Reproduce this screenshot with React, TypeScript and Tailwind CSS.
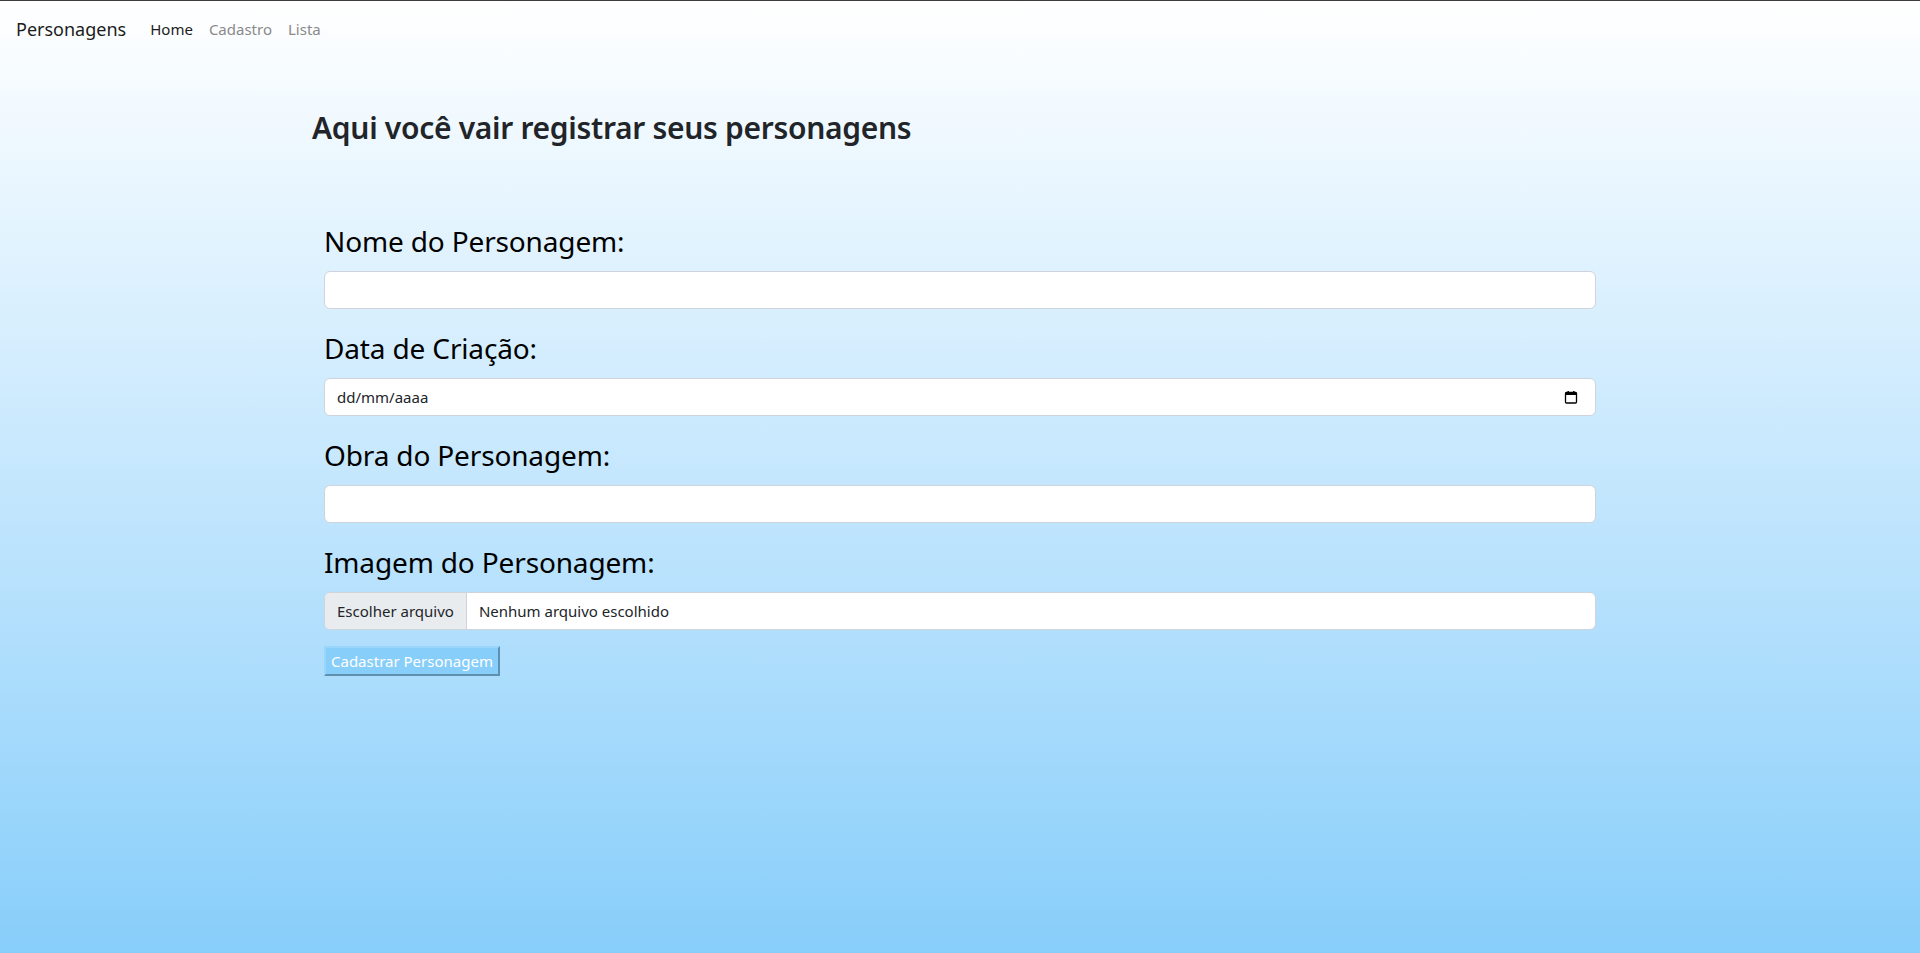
import React from 'react';

const font = { fontFamily: '"Noto Sans", "Open Sans", Arial, sans-serif' };

const fields = [
  { label: 'Nome do Personagem:', kind: 'text' },
  { label: 'Data de Criação:', kind: 'date' },
  { label: 'Obra do Personagem:', kind: 'text' },
  { label: 'Imagem do Personagem:', kind: 'file' },
];

const CalendarIcon = () => (
  <svg width="14" height="14" viewBox="0 0 14 14" fill="none">
    <rect x="1.5" y="2.5" width="11" height="10.5" rx="1" stroke="#000" strokeWidth="1.3" />
    <rect x="1.5" y="2.5" width="11" height="2.5" fill="#000" />
    <rect x="3.5" y="1" width="1.4" height="2" fill="#000" />
    <rect x="9.1" y="1" width="1.4" height="2" fill="#000" />
  </svg>
);

const Field = ({ label, kind }: { label: string; kind: string }) => (
  <div className="mb-[17px]">
    <label className="block text-[28px] leading-[44px] mb-2 text-black tracking-[-0.15px]">{label}</label>
    {kind === 'text' && (
      <input
        type="text"
        className="block w-full h-[38px] bg-white border border-[#ced4da] rounded-[6px] px-3 text-[16px] outline-none"
      />
    )}
    {kind === 'date' && (
      <div className="flex items-center justify-between w-full h-[38px] bg-white border border-[#ced4da] rounded-[6px] pl-3 pr-[17px] text-[15px] text-[#212529]">
        <span>dd/mm/aaaa</span>
        <CalendarIcon />
      </div>
    )}
    {kind === 'file' && (
      <div className="flex items-center w-full h-[38px] bg-white border border-[#ced4da] rounded-[6px] overflow-hidden text-[15px] text-[#212529]">
        <span className="h-full flex items-center px-3 bg-[#e9ecef] border-r border-[#ced4da]">Escolher arquivo</span>
        <span className="ml-3">Nenhum arquivo escolhido</span>
      </div>
    )}
  </div>
);

export default function App() {
  return (
    <div
      className="min-h-screen w-full bg-linear-to-b from-white to-[#87cefa] border-t border-[#3c3c3c]"
      style={font}
    >
      <nav className="flex items-center h-14 pl-4">
        <span className="text-[18px] text-[#1c1c1c] mr-4">Personagens</span>
        <ul className="flex items-center text-[15px]">
          <li className="px-2 text-[#1c1c1c]">Home</li>
          <li className="px-2 text-[#8a8a8a]">Cadastro</li>
          <li className="px-2 text-[#8a8a8a]">Lista</li>
        </ul>
      </nav>
      <main className="max-w-[1320px] mx-auto px-3">
        <h2 className="mt-[52px] text-[30px] leading-[38px] font-semibold text-[#212529] tracking-[-0.3px]">
          Aqui você vair registrar seus personagens
        </h2>
        <form className="mt-[72px] px-3">
          {fields.map((f) => (
            <Field key={f.label} label={f.label} kind={f.kind} />
          ))}
          <button
            type="button"
            className="mt-[-1px] h-[30px] px-[5px] bg-[#87cefa] text-white text-[15px] border-2 border-t-[#9ad6fb] border-l-[#9ad6fb] border-r-[#5f90b0] border-b-[#5f90b0]"
          >
            Cadastrar Personagem
          </button>
        </form>
      </main>
    </div>
  );
}
